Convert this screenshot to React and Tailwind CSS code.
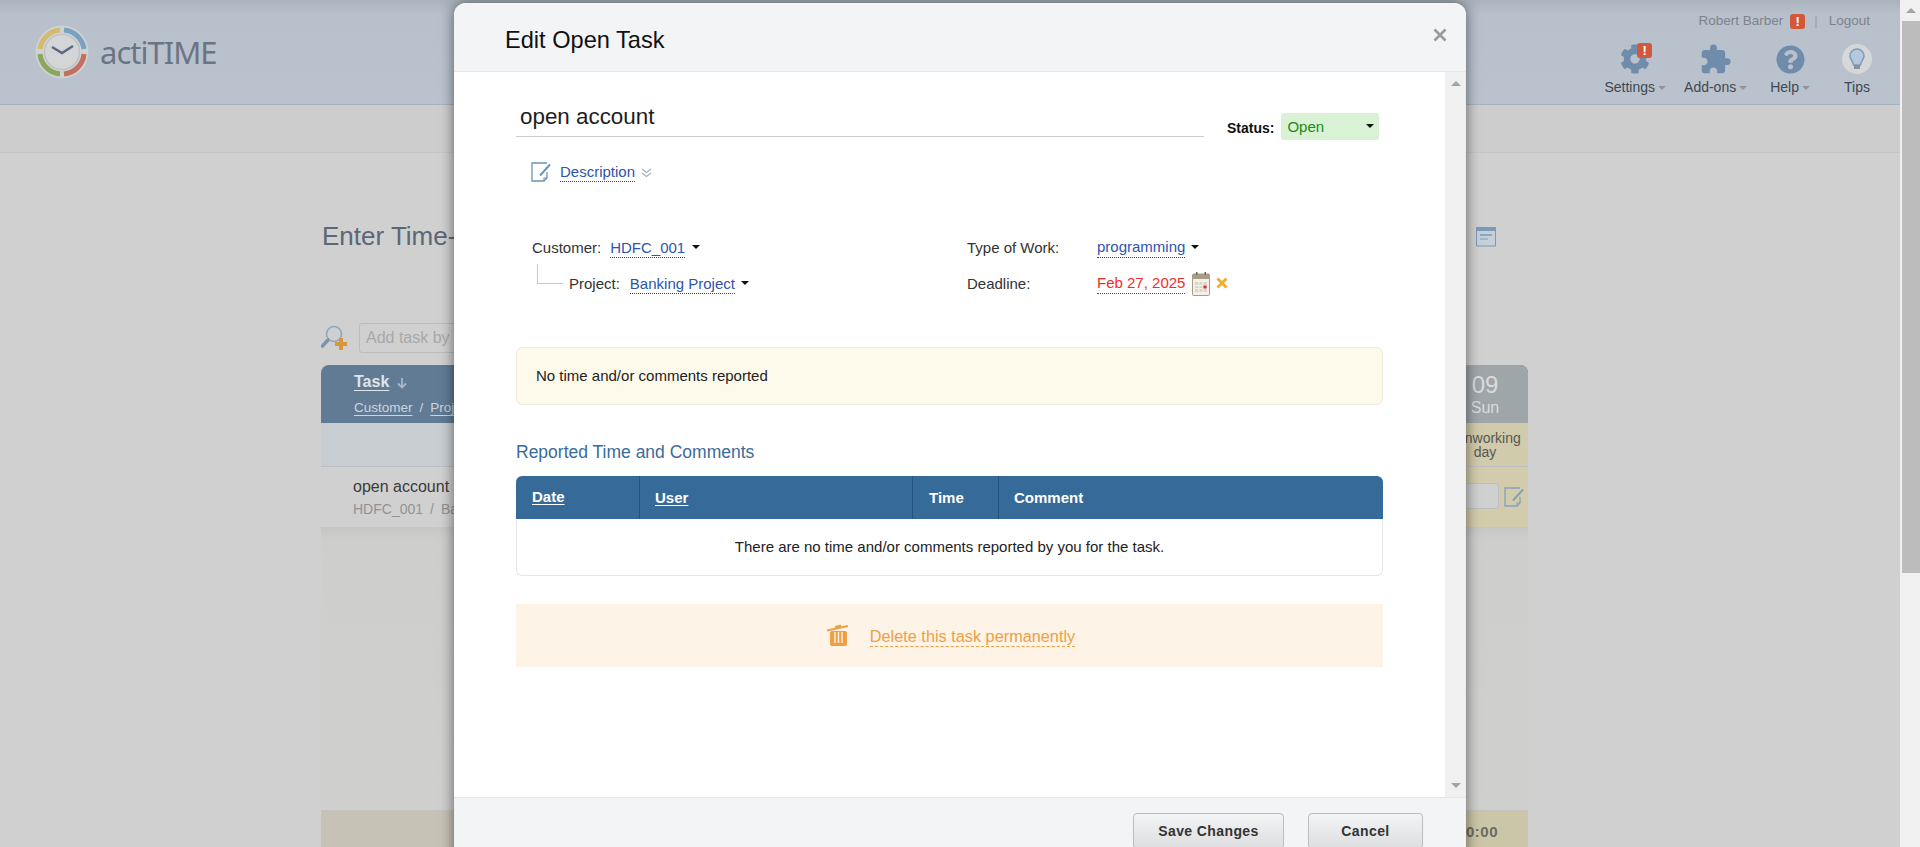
import { FaCog, FaQuestionCircle } from "react-icons/fa";
import { MdExtension } from "react-icons/md";

const font = { fontFamily: '"Liberation Sans", Arial, sans-serif' };

const Caret = ({ className = "" }) => (
  <span className={`inline-block w-0 h-0 border-x-[4px] border-x-transparent border-t-[4px] border-t-[#111] ${className}`} />
);

const SmallArrow = () => (
  <span className="inline-block w-0 h-0 ml-[3px] mt-[2px] border-x-[4px] border-x-transparent border-t-[4px] border-t-[#8f959c]" />
);

const Alert = ({ className = "" }) => (
  <span className={`flex items-center justify-center rounded-[3px] bg-[#d2583b] text-white font-bold text-[13px] leading-none ${className}`}>
    !
  </span>
);

const EditIcon = ({ color = "#6c94bb", size = 20 }) => (
  <svg width={size} height={size} viewBox="0 0 20 20" fill="none">
    <path d="M16 1H1v18h12l3-3V10" stroke={color} strokeWidth="1.3" />
    <path d="M13 19v-3h3" stroke={color} strokeWidth="1.1" />
    <path d="M9 13.5L19 2.5" stroke={color} strokeWidth="2" />
  </svg>
);

const LogoClock = () => (
  <svg width="54" height="54" viewBox="0 0 54 54">
    <circle cx="27" cy="27" r="26.5" fill="#cfd1d3" />
    <circle cx="27" cy="27" r="17.5" fill="#d4d5d6" stroke="#bcbec1" strokeWidth="1.2" />
    <path d="M5 24A22 22 0 0 1 25 5" fill="none" stroke="#d4bb6e" strokeWidth="5" />
    <path d="M29 5A22 22 0 0 1 49 24" fill="none" stroke="#7aa1c4" strokeWidth="5" />
    <path d="M49 29A22 22 0 0 1 29 49" fill="none" stroke="#c4705f" strokeWidth="5" />
    <path d="M25 49A22 22 0 0 1 5 29" fill="none" stroke="#8aa85c" strokeWidth="5" />
    <path d="M17 22l10 6 11-7" fill="none" stroke="#5d6781" strokeWidth="2.4" />
  </svg>
);

const Bulb = () => (
  <span className="flex items-center justify-center w-[30px] h-[30px] rounded-full bg-[#d6d7d8]">
    <svg width="16" height="22" viewBox="0 0 16 22">
      <path d="M8 1a7 7 0 0 0-7 7c0 3 3 5 3.500 9h7C12 13 15 11 15 8a7 7 0 0 0-7-7z" fill="#b5c8dc" stroke="#7c9cbc" strokeWidth="1.500" />
      <rect x="5" y="17" width="6" height="4" fill="#8b9198" />
    </svg>
  </span>
);

const HeaderTool = ({ label, icon, arrow, className = "" }) => (
  <div className={`flex flex-col items-center ${className}`}>
    <div className="relative h-[32px] flex items-center justify-center">{icon}</div>
    <div className="mt-[3px] h-[18px] flex items-center text-[14px] text-[#3f4852]">
      {label}
      {arrow && <SmallArrow />}
    </div>
  </div>
);

const TopHeader = () => (
  <header className="relative h-[105px] flex justify-between border-b border-[#a6b1c0] bg-[linear-gradient(180deg,#a9b2bd_0,#b7c0cb_14px,#bac3cd_100%)]">
    <div className="flex items-start pl-[35px] pt-[25px]">
      <LogoClock />
      <span className="ml-[11px] mt-[8px] text-[31px] leading-[38px] tracking-[-1px] text-[#6b7485]" style={{ fontFamily: '"Noto Sans", sans-serif' }}>
        actiTIME
      </span>
    </div>
    <div className="flex flex-col items-end pr-[30px] pt-[12px]">
      <div className="flex items-center h-[18px] text-[13.500px] text-[#7b838f]">
        <span>Robert Barber</span>
        <Alert className="ml-[7px] w-[15px] h-[15px]" />
        <span className="ml-[9px] text-[#9aa0a6]">|</span>
        <span className="ml-[11px]">Logout</span>
      </div>
      <div className="flex mt-[13px] -mr-[2px]">
        <HeaderTool
          label="Settings"
          arrow
          icon={
            <>
              <FaCog className="text-[#6f8cab]" size={30} />
              <Alert className="absolute left-[17px] top-0 w-[15px] h-[15px]" />
            </>
          }
        />
        <HeaderTool label="Add-ons" arrow className="ml-[18px]" icon={<MdExtension className="text-[#6f8cab]" size={33} />} />
        <HeaderTool label="Help" arrow className="ml-[23px]" icon={<FaQuestionCircle className="text-[#6f8cab]" size={29} />} />
        <HeaderTool label="Tips" className="ml-[32px]" icon={<Bulb />} />
      </div>
    </div>
  </header>
);

const BackgroundPage = () => (
  <div className="w-[1900px] shrink-0">
    <TopHeader />
    <div className="h-[48px] bg-[#cdcdcd] border-b border-[#c5c5c5]" />
    <div className="pl-[321px] pr-[404px]">
      <div className="flex items-center justify-between h-[40px] mt-[63px]">
        <h1 className="ml-[1px] text-[26px] text-[#5c6774]">Enter Time-Track</h1>
        <svg width="20" height="21" viewBox="0 0 20 21" fill="none">
          <rect x="0.500" y="2" width="19" height="18" fill="#c5d0da" stroke="#7e99b6" />
          <rect x="0" y="1" width="20" height="4" fill="#7e99b6" />
          <rect x="4" y="8" width="12" height="2" fill="#8fa6bd" />
          <rect x="4" y="12" width="8" height="2" fill="#a3b6c9" />
        </svg>
      </div>
      <div className="flex items-center h-[30px] mt-[67px]">
        <svg width="27" height="27" viewBox="0 0 27 27" fill="none">
          <circle cx="13" cy="9" r="7.500" stroke="#8ea8c0" strokeWidth="1.600" />
          <path d="M7 15L1.500 21" stroke="#7895b0" strokeWidth="3.500" strokeLinecap="round" />
          <path d="M20 13v12M14 19h12" stroke="#d9973d" strokeWidth="4" />
        </svg>
        <div className="ml-[11px] w-[400px] h-[30px] pl-[6px] flex items-center border border-[#bcbcbc] rounded-[3px] text-[16px] text-[#a8a8a8]">
          Add task by
        </div>
      </div>
    </div>
    <div className="ml-[321px] w-[1207px] mt-[12px] h-[482px] flex flex-col">
      <div className="h-[58px] flex justify-between rounded-t-[8px] overflow-hidden bg-[#617b95]">
        <div className="pl-[33px] pt-[6px] text-[#dfe5ea]">
          <div className="flex items-center h-[22px]">
            <span className="font-bold text-[16px] underline underline-offset-[3px]">Task</span>
            <svg className="ml-[8px] mt-[2px]" width="10" height="11" viewBox="0 0 10 11" fill="none">
              <path d="M5 0v9M1 5.500l4 4 4-4" stroke="#a9b7c5" strokeWidth="1.800" />
            </svg>
          </div>
          <div className="mt-[5px] text-[13.500px] text-[#ccd5dd]">
            <span className="underline underline-offset-[3px]">Customer</span>
            <span className="mx-[7px]">/</span>
            <span className="underline underline-offset-[3px]">Project</span>
          </div>
        </div>
        <div className="w-[86px] flex flex-col items-center bg-[#9ea6a9] text-[#d9dbdb] pt-[6px]">
          <span className="text-[24px] leading-[28px]">09</span>
          <span className="text-[16px] leading-[18px]">Sun</span>
        </div>
      </div>
      <div className="h-[44px] flex justify-between bg-[#c8cdd1] border-b border-[#bcbec6]">
        <div />
        <div className="w-[86px] bg-[#d0cbaa] text-center text-[14px] leading-[14px] pt-[8px] text-[#565656] overflow-hidden whitespace-nowrap">
          <div>nonworking</div>
          <div>day</div>
        </div>
      </div>
      <div className="h-[60px] flex justify-between">
        <div className="pl-[32px] pt-[11px]">
          <div className="text-[16px] leading-[18px] text-[#3a3a3a]">open account</div>
          <div className="mt-[4px] text-[14px] leading-[18px] text-[#929292]">
            HDFC_001<span className="mx-[7px]">/</span>Banking
          </div>
        </div>
        <div className="w-[86px] bg-[#d2ccad] flex items-start justify-end pt-[16px] pr-[4px]">
          <div className="w-[50px] h-[26px] rounded-[3px] border border-[#bcbfc0] bg-[#d0d0d0]" />
          <span className="ml-[5px] mt-[4px]">
            <EditIcon color="#85a0bd" />
          </span>
        </div>
      </div>
      <div className="h-[283px] bg-[linear-gradient(180deg,#c5c5c3_0,#cececc_12px,#cfcfcd_100%)]" />
      <div className="flex-1 flex justify-between border-t border-[#c2c2c0] bg-[#c7c2b6]">
        <div />
        <div className="w-[86px] bg-[#cbc6a8] flex justify-end pr-[30px] pt-[10px] text-[15px] font-bold tracking-[0.5px] text-[#6c6c62] whitespace-nowrap">
          0:00
        </div>
      </div>
    </div>
  </div>
);

const Dotted = ({ children, color = "blue" }) => (
  <span
    className={
      color === "red"
        ? "text-[#f22c2c] pb-[1px] border-b border-dotted border-[#d81818] leading-[18px]"
        : "text-[#2d55ad] pb-[1px] border-b border-dotted border-[#1f43a0] leading-[18px]"
    }
  >
    {children}
  </span>
);

const TaskFields = () => (
  <div className="flex mt-[53px] text-[15px] text-[#333]">
    <div className="w-[451px]">
      <div className="flex items-center h-[24px] pl-[16px]">
        <span>Customer:</span>
        <span className="ml-[9px]">
          <Dotted>HDFC_001</Dotted>
        </span>
        <Caret className="ml-[7px] -mt-[3px]" />
      </div>
      <div className="flex items-center h-[24px] mt-[12px] pl-[21px]">
        <div className="self-start -mt-[8px] w-[26px] h-[20px] border-l border-b border-[#c8c8c8]" />
        <span className="ml-[6px]">Project:</span>
        <span className="ml-[10px]">
          <Dotted>Banking Project</Dotted>
        </span>
        <Caret className="ml-[6px] -mt-[3px]" />
      </div>
    </div>
    <div>
      <div className="flex items-center h-[24px]">
        <span className="w-[130px]">Type of Work:</span>
        <Dotted>programming</Dotted>
        <Caret className="ml-[6px] -mt-[3px]" />
      </div>
      <div className="flex items-center h-[24px] mt-[12px]">
        <span className="w-[130px]">Deadline:</span>
        <Dotted color="red">Feb 27, 2025</Dotted>
        <svg className="ml-[7px]" width="18" height="24" viewBox="0 0 18 24">
          <rect x="0.500" y="2" width="17" height="21.500" rx="1" fill="#f3f0e8" stroke="#a89c84" />
          <rect x="1" y="2" width="16" height="5" fill="#a89c84" />
          <rect x="4" y="0" width="1.500" height="3" fill="#6f6754" />
          <rect x="12.500" y="0" width="1.500" height="3" fill="#6f6754" />
          <rect x="3" y="10" width="12" height="10" fill="#d9d6cf" />
          <path d="M7 10v10M11 10v10M3 13.500h12M3 16.500h12" stroke="#f3f0e8" strokeWidth="1.200" />
          <rect x="11.500" y="13.500" width="3" height="3" fill="#e0262b" />
        </svg>
        <svg className="ml-[6px] -mt-[2px]" width="12" height="12" viewBox="0 0 12 12">
          <path d="M1.500 1.500l9 9M10.500 1.500l-9 9" stroke="#f2ae2e" strokeWidth="3" />
        </svg>
      </div>
    </div>
  </div>
);

const ReportedTable = () => (
  <div className="mt-[12px]">
    <div className="h-[43px] flex items-center rounded-t-[6px] bg-[#366a99] text-white font-bold text-[15px]">
      <div className="w-[124px] h-full flex items-center pl-[16px] border-r border-[#23527f]">
        <span className="underline underline-offset-[2px]">Date</span>
      </div>
      <div className="w-[273px] h-full flex items-center pl-[15px] pt-[1px] border-r border-[#23527f]">
        <span className="underline underline-offset-[2px]">User</span>
      </div>
      <div className="w-[86px] h-full flex items-center pl-[16px] pt-[1px] border-r border-[#23527f]">Time</div>
      <div className="pl-[15px] pt-[1px]">Comment</div>
    </div>
    <div className="h-[57px] pt-[1px] flex items-center justify-center rounded-b-[6px] border border-t-0 border-[#e6e6e6] text-[15px] text-[#222]">
      There are no time and/or comments reported by you for the task.
    </div>
  </div>
);

const EditTaskModal = () => (
  <div className="absolute left-[454px] top-[3px] w-[1012px] h-[900px] flex flex-col rounded-t-[12px] bg-white shadow-[0_0_14px_rgba(0,0,0,0.55)] overflow-hidden">
    <div className="relative h-[69px] shrink-0 flex items-center pl-[51px] pt-[7px] bg-[#f3f4f6] border-b border-[#e5e6e8] text-[23.600px] text-[#111]">
      Edit Open Task
      <svg className="absolute right-[19px] top-[25px]" width="14" height="14" viewBox="0 0 14 14">
        <path d="M1.500 1.500l11 11M12.500 1.500l-11 11" stroke="#9a9a9a" strokeWidth="2.600" />
      </svg>
    </div>
    <div className="h-[725px] shrink-0 flex">
      <div className="flex-1 pl-[62px] pr-[62px] pt-[32px]">
        <div className="flex h-[36px] items-start">
          <div className="w-[688px] h-[33px] pl-[4px] border-b border-[#cccccc] text-[22.400px] leading-[25px] text-[#1d1d1d]">open account</div>
          <span className="ml-[23px] mt-[15px] text-[14px] leading-[18px] font-bold text-[#111]">Status:</span>
          <div className="relative ml-[7px] mt-[9px] w-[98px] h-[27px] pl-[6px] pt-[1px] flex items-center rounded-[2px] bg-[#d9f2d5] text-[15px] text-[#1b8a12]">
            Open
            <Caret className="absolute right-[5px] top-[11px]" />
          </div>
        </div>
        <div className="flex items-center h-[22px] mt-[21px] pl-[15px] text-[15px]">
          <EditIcon />
          <span className="ml-[9px]">
            <Dotted>Description</Dotted>
          </span>
          <svg className="ml-[6px]" width="11" height="11" viewBox="0 0 11 11" fill="none">
            <path d="M1 2l4.500 3.500L10 2M1 6l4.500 3.500L10 6" stroke="#9db3c9" strokeWidth="1.300" />
          </svg>
        </div>
        <TaskFields />
        <div className="mt-[51px] h-[58px] pt-[1px] flex items-center pl-[19px] rounded-[6px] border border-[#f0ead8] bg-[#fefaeb] text-[15px] text-[#222]">
          No time and/or comments reported
        </div>
        <h2 className="mt-[35px] h-[24px] flex items-center text-[17.500px] text-[#3a6b9a]">Reported Time and Comments</h2>
        <ReportedTable />
        <div className="mt-[28px] h-[63px] flex items-center justify-center bg-[#fdf3e6] text-[#eea044] text-[16.300px]">
          <svg className="-mt-[4px] ml-[2px]" width="24" height="26" viewBox="0 0 24 26" fill="none">
            <path d="M1 9.500L22 5M9 6l6-1.500" stroke="#eea044" strokeWidth="2" />
            <rect x="4" y="10" width="17" height="15" rx="2" fill="#eea044" />
            <path d="M9 11v11M12.500 11v11M16 11v11" stroke="#fdf3e6" strokeWidth="1.400" />
          </svg>
          <span className="ml-[20px] mt-[2px] border-b border-dashed border-[#eea044] leading-[19px]">Delete this task permanently</span>
        </div>
      </div>
      <div className="w-[21px] flex flex-col items-center justify-between pt-[9px] pb-[9px] bg-[#f0f0f0]">
        <span className="w-0 h-0 border-x-[5px] border-x-transparent border-b-[5px] border-b-[#a3a3a3]" />
        <span className="w-0 h-0 border-x-[5px] border-x-transparent border-t-[5px] border-t-[#a3a3a3]" />
      </div>
    </div>
    <div className="flex-1 flex justify-end gap-[24px] pt-[15px] pr-[43px] bg-[#f3f4f6] border-t border-[#e5e6e8]">
      <button className="w-[151px] h-[36px] rounded-[4px] border border-[#bcbcbc] bg-[linear-gradient(180deg,#f3f4f5,#dcdee0)] text-[14px] font-bold tracking-[0.4px] text-[#333]">
        Save Changes
      </button>
      <button className="w-[115px] h-[36px] rounded-[4px] border border-[#bcbcbc] bg-[linear-gradient(180deg,#f3f4f5,#dcdee0)] text-[14px] font-bold tracking-[0.4px] text-[#333]">
        Cancel
      </button>
    </div>
  </div>
);

const PageScrollbar = () => (
  <div className="flex-1 flex flex-col items-end bg-[#f0f0f0]">
    <div className="h-[21px] w-[19px] flex items-center justify-center">
      <span className="w-0 h-0 border-x-[5px] border-x-transparent border-b-[5px] border-b-[#a3a3a3]" />
    </div>
    <div className="w-[18px] h-[552px] bg-[#bcbcbc]" />
  </div>
);

export default function App() {
  return (
    <div className="relative flex h-[847px] overflow-hidden bg-[#d0d0d0]" style={font}>
      <BackgroundPage />
      <PageScrollbar />
      <EditTaskModal />
    </div>
  );
}
